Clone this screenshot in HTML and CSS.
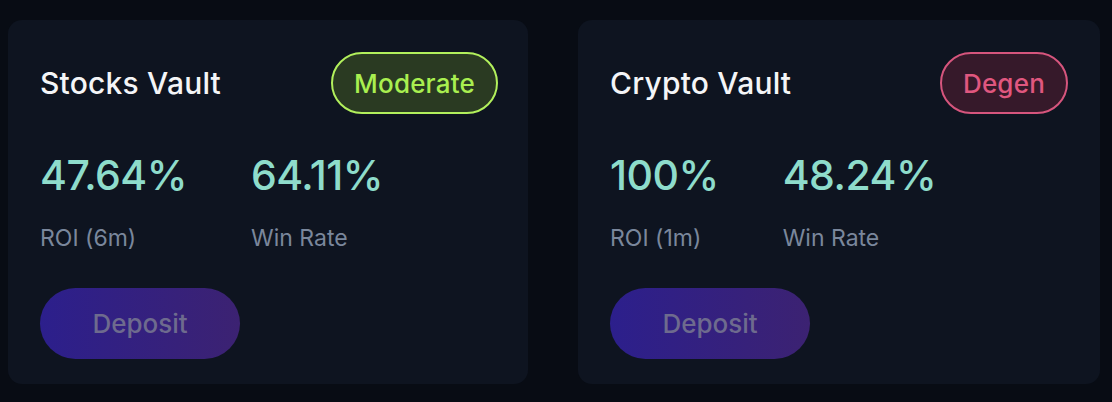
FILE: index.html
```html
<!DOCTYPE html>
<html lang="en">
<head>
<meta charset="utf-8">
<link rel="stylesheet" href="styles.css">
</head>
<body>
<div class="grid">
  <div class="card">
    <div class="head">
      <div class="title">Stocks Vault</div>
      <div class="badge moderate">Moderate</div>
    </div>
    <div class="stats">
      <div class="stat"><div class="num">47.64%</div><div class="lbl">ROI (6m)</div></div>
      <div class="stat"><div class="num">64.11%</div><div class="lbl">Win Rate</div></div>
    </div>
    <button class="deposit">Deposit</button>
  </div>
  <div class="card">
    <div class="head">
      <div class="title">Crypto Vault</div>
      <div class="badge degen">Degen</div>
    </div>
    <div class="stats">
      <div class="stat"><div class="num">100%</div><div class="lbl">ROI (1m)</div></div>
      <div class="stat"><div class="num">48.24%</div><div class="lbl">Win Rate</div></div>
    </div>
    <button class="deposit">Deposit</button>
  </div>
</div>
</body>
</html>
```
FILE: styles.css
```css
html, body { margin: 0; padding: 0; }
body {
  background: #080c14;
  font-family: Inter, "Noto Sans", sans-serif;
  width: 1112px;
  height: 402px;
  overflow: hidden;
}
.grid {
  display: grid;
  grid-template-columns: 520px 522px;
  column-gap: 50px;
  padding: 20px 12px 0 8px;
}
.card {
  background: #0e1420;
  border-radius: 14px;
  height: 364px;
  box-sizing: border-box;
  padding: 32px 32px 0 32px;
  display: flex;
  flex-direction: column;
}
.head {
  display: flex;
  justify-content: space-between;
  align-items: center;
  height: 62px;
}
.title {
  color: #f4f5f7;
  font-size: 30px;
  font-weight: 500;
  letter-spacing: 0.2px;
}
.badge {
  box-sizing: border-box;
  height: 62px;
  border-radius: 31px;
  border: 2px solid;
  padding: 0 21px;
  display: flex;
  align-items: center;
  font-size: 26px;
  font-weight: 500;
  letter-spacing: 0.2px;
}
.moderate { border-color: #b2f05c; background: #2a3a22; color: #a9ef50; margin-right: -2px; }
.degen { border-color: #d6557d; background: #36192a; color: #e0577f; }
.stats {
  display: flex;
  gap: 64px;
  margin-top: 36px;
}
.num {
  color: #8edccb;
  font-size: 41px;
  font-weight: 500;
  line-height: 50px;
  letter-spacing: -0.5px;
}
.lbl {
  color: #7a879c;
  font-size: 23px;
  line-height: 28px;
  margin-top: 24px;
}
.deposit {
  margin-top: 36px;
  width: 200px;
  height: 71px;
  border: none;
  border-radius: 36px;
  background: linear-gradient(90deg, #2c1f8c, #3c2272);
  color: #6e6b8e;
  font-family: Inter, "Noto Sans", sans-serif;
  font-size: 26px;
  font-weight: 500;
  padding: 0;
}
```
